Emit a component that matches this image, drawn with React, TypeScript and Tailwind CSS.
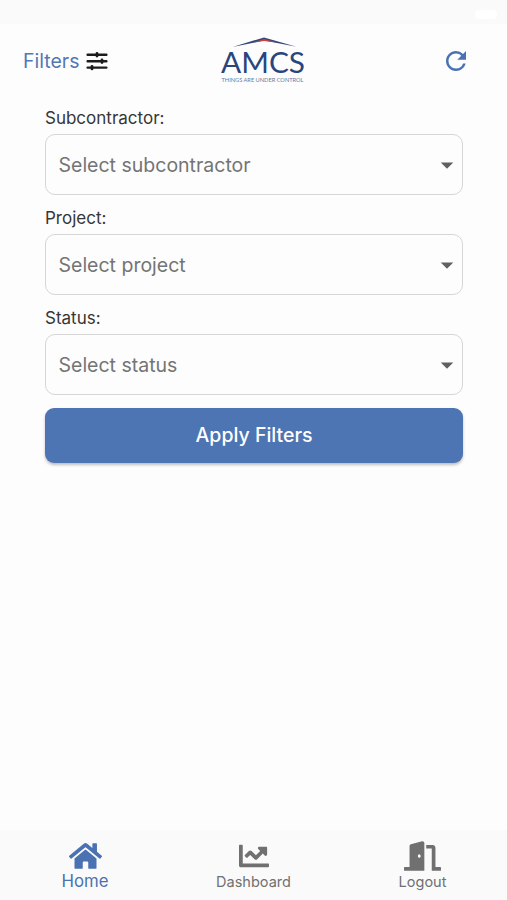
import { useState } from 'react'
import type { IconType } from 'react-icons'
import { FaChartLine, FaDoorOpen, FaHome } from 'react-icons/fa'
import { MdArrowDropDown, MdRefresh } from 'react-icons/md'

interface FilterField {
  id: string
  label: string
  placeholder: string
}

interface Tab {
  id: string
  label: string
  icon: IconType
  iconClass: string
}

const fields: FilterField[] = [
  { id: 'subcontractor', label: 'Subcontractor:', placeholder: 'Select subcontractor' },
  { id: 'project', label: 'Project:', placeholder: 'Select project' },
  { id: 'status', label: 'Status:', placeholder: 'Select status' },
]

const tabs: Tab[] = [
  { id: 'home', label: 'Home', icon: FaHome, iconClass: 'h-[30px] w-[33px]' },
  { id: 'dashboard', label: 'Dashboard', icon: FaChartLine, iconClass: 'h-[30px] w-[30px]' },
  { id: 'logout', label: 'Logout', icon: FaDoorOpen, iconClass: 'h-[30px] w-[37px]' },
]

function SlidersIcon() {
  return (
    <svg width="22" height="20" viewBox="0 0 22 20" stroke="#1c1c1c" strokeLinecap="round">
      <path d="M1.6 3.7h18.8M1.6 10.2h18.8M1.6 16.6h18.8" strokeWidth="2.4" />
      <path d="M11 2.4v2.6M16 8.9v2.6M6 15.3v2.6" strokeWidth="2.8" />
    </svg>
  )
}

function Logo() {
  return (
    <svg width="86" height="54" viewBox="0 -2 86 54">
      <path d="M12.5 11 44 1.4 76.5 10.8 44 4.6z" fill="#34477c" />
      <path d="M34 6.2 44 3 57 6.6 44 4.9z" fill="#c9443c" />
      <text x="1" y="36.9" textLength="84" lengthAdjust="spacingAndGlyphs" fontSize="29.5" fontFamily="Lato, sans-serif" fill="#29457d">
        AMCS
      </text>
      <text x="1.5" y="45.6" textLength="82" lengthAdjust="spacingAndGlyphs" fontSize="6.4" fontFamily="Lato, sans-serif" fill="#66799f">
        THINGS ARE UNDER CONTROL
      </text>
    </svg>
  )
}

function StatusBar() {
  return (
    <div className="flex h-6 shrink-0 items-center justify-end bg-[#fafafa] pr-[10px]">
      <span className="mt-1 h-[9px] w-[22px] rounded-sm bg-white" />
    </div>
  )
}

export default function App() {
  const [activeTab, setActiveTab] = useState('home')

  return (
    <div className="flex h-screen flex-col bg-[#fdfdfd] font-['Inter',sans-serif]">
      <StatusBar />

      <header className="flex h-[74px] shrink-0 items-center justify-between pr-[36px] pl-[23px]">
        <button className="flex w-[110px] items-center gap-[7px] text-[19.5px] text-[#5278b5]">
          <span className="pt-[2px]">Filters</span>
          <SlidersIcon />
        </button>
        <div className="ml-[11px]">
          <Logo />
        </div>
        <button className="flex w-[90px] justify-end text-[#4a72b2]" aria-label="Refresh">
          <MdRefresh size={30} />
        </button>
      </header>

      <main className="flex-1 pt-[8px] pr-[44px] pl-[45px]">
        {fields.map((field) => (
          <div key={field.id} className="h-[100.2px]">
            <p className="h-7 text-[17px] leading-[25px] text-[#363636]">{field.label}</p>
            <button className="flex h-[61px] w-full items-center justify-between rounded-[10px] border-[1.5px] border-[#d6d6d6] pl-[12.5px] text-[19.5px] text-[#747474]">
              <span className="pt-[2px]">{field.placeholder}</span>
              <MdArrowDropDown size={30} className="text-[#606060]" />
            </button>
          </div>
        ))}
        <button className="mt-[1px] h-[55px] w-full rounded-[9px] bg-[#4d74b3] pt-[2px] text-[19.5px] font-medium text-white shadow-[0_2px_3px_rgba(0,0,0,0.25)]">
          Apply Filters
        </button>
      </main>

      <nav className="grid h-[70px] shrink-0 grid-cols-3 bg-[#fafafa]">
        {tabs.map(({ id, label, icon: Icon, iconClass }) => (
          <button
            key={id}
            onClick={() => setActiveTab(id)}
            className={`flex flex-col items-center pt-[11px] ${activeTab === id ? 'pl-[1px] text-[#4a72b2]' : 'text-[#707070]'}`}
          >
            <Icon className={iconClass} />
            <span className={activeTab === id ? 'text-[16.8px] leading-[20px]' : 'text-[14.5px] leading-[22px]'}>
              {label}
            </span>
          </button>
        ))}
      </nav>
    </div>
  )
}
